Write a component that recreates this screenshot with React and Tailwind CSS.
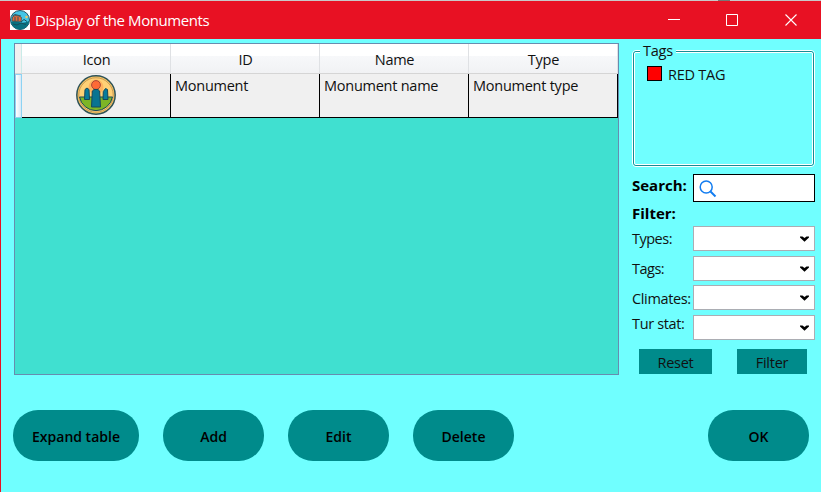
const columns = ["Icon", "ID", "Name", "Type"];

function MonumentIcon() {
  return (
    <svg viewBox="0 0 40 40" className="h-10 w-10" stroke="#17485a">
      <circle cx="20" cy="20" r="19.2" fill="#f8c765" stroke="#2f5358" strokeWidth="1.5" />
      <circle cx="20" cy="20" r="17.2" fill="#ffd176" stroke="#a77b45" strokeWidth=".6" />
      <circle cx="20" cy="12" r="7.5" fill="#ffb25d" stroke="none" />
      <path d="M3.5 22H36.5A16.8 16.8 0 0 1 3.5 22Z" fill="#7db526" strokeWidth="1" />
      <circle cx="20" cy="10" r="4.4" fill="#ff6a36" stroke="#a94837" strokeWidth="1" />
      <path d="M8.5 24.5 9 14.5 11 13 13 14.5 13.5 24.5ZM27 24.5 27.3 16.5 29.5 13.5 31.5 14.5 32 24.5Z" fill="#087c9c" strokeWidth="1" />
      <path d="M15.5 32 16.3 16 18 14.5H22L23.6 16 24.5 32Z" fill="#087491" strokeWidth="1" />
    </svg>
  );
}

function AppIcon() {
  return (
    <svg viewBox="0 0 20 20" className="h-5 w-5 bg-white">
      <circle cx="10" cy="10" r="9.5" fill="#43c5e5" stroke="#285060" />
      <path d="M.8 12Q5 10 9 12T19.2 11A9.3 9.3 0 0 1 .8 12Z" fill="#087080" />
      <path d="M2 11 2.5 7 5 5.5 9 6 11.5 7.5 11 11.5Z" fill="#e46b3b" stroke="#444c4c" strokeWidth=".8" />
      <path d="M5 7V11M8 7V11M2.5 6 5 4.5 11 6" stroke="#38535a" fill="none" />
      <path d="M11 12 14 9.5 17 11.5M3 14 7 15 11 13 16 14.5" stroke="#164d5c" fill="none" />
      <circle cx="16.5" cy="7" r="1.2" fill="#f5c65b" />
    </svg>
  );
}

function Combo({ label, labelClass, className }) {
  return (
    <div className={"flex h-[25px] " + className}>
      <span className={"w-[61px] shrink-0 whitespace-nowrap " + labelClass}>{label}</span>
      <div className="flex h-[25px] w-[122px] items-center justify-end border border-[#abadb3] bg-white pr-[5px]">
        <svg viewBox="0 0 9 6" className="h-[6px] w-[9px]">
          <path d="M0 .5H2.5L4.5 2 6.5.5H9V1.5L4.5 5.8 0 1.5Z" fill="#000" />
        </svg>
      </div>
    </div>
  );
}

function Pill({ children, className }) {
  return (
    <button className={"flex h-[51px] items-center justify-center rounded-[25px] bg-[#008b8b] pt-[3px] text-[14px] font-semibold " + className}>
      {children}
    </button>
  );
}

export default function App() {
  return (
    <div className="flex h-[492px] w-[821px] flex-col overflow-hidden bg-[#70ffff] font-['Open_Sans','Noto_Sans',sans-serif] text-[14.5px] leading-5 tracking-[-0.25px] text-[#111]">
      <div className="flex h-px shrink-0 bg-[#c8c8c8]">
        <div className="ml-[718px] w-3 bg-[#777]" />
      </div>
      <header className="flex h-[38px] shrink-0 items-center bg-[#e81123] pl-[10px] text-white">
        <AppIcon />
        <h1 className="-mt-px ml-[5px] text-[15px] tracking-[-0.42px]">Display of the Monuments</h1>
        <div className="ml-auto flex items-center pr-6">
          <svg className="h-3 w-3" viewBox="0 0 12 12"><path d="M0 5.5H12" stroke="white" /></svg>
          <svg className="ml-[46px] h-3 w-3" viewBox="0 0 12 12"><path d="M.5.5H11.5V11.5H.5Z" stroke="white" fill="none" /></svg>
          <svg className="ml-[47px] h-3 w-3" viewBox="0 0 12 12"><path d="M.5.5 11.5 11.5M11.5.5.5 11.5" stroke="white" strokeWidth="1.1" /></svg>
        </div>
      </header>

      <main className="flex h-[453px] flex-col border-l border-[#e81123]">
        <div className="flex h-[337px] pl-[13px] pt-1">
          <section className="h-[332px] w-[605px] shrink-0 border border-[#688caf] bg-[#40e0d0]">
            <div className="flex h-[30px] border-b border-[#d5d5d5] bg-linear-to-b from-white from-40% via-[#f7f8fa] via-42% to-[#f1f2f4]">
              <div className="w-[7px] border-r border-[#c9ebe8] bg-[#f0f0f0]" />
              {columns.map((c) => (
                <div key={c} className="w-[149px] border-r border-[#dfe1e4] pl-px pt-[6px] text-center">{c}</div>
              ))}
            </div>
            <div className="flex h-11">
              <div className="w-[7px] border border-[#8dd3f3] bg-linear-to-r from-white to-[#d9e8f5]" />
              <div className="flex w-[596px] border-b border-black bg-[#f0f0f0]">
                <div className="flex w-[149px] justify-center border-r border-black pt-px"><MonumentIcon /></div>
                <div className="w-[149px] border-r border-black pl-1 pt-[2px]">Monument</div>
                <div className="w-[149px] border-r border-black pl-1 pt-[2px]">Monument name</div>
                <div className="w-[149px] border-r border-black pl-1 pt-[2px]">Monument type</div>
              </div>
            </div>
          </section>

          <aside className="ml-[13px] w-[183px] shrink-0">
            <div className="relative mt-[7px] h-[117px] w-[183px] rounded-[4px] border border-white">
              <div className="h-full rounded-[3px] border border-[#168e96]">
                <div className="flex h-full items-start rounded-[2px] border border-white pl-3 pt-[11px]">
                  <div className="mt-[2px] h-[15px] w-[15px] border border-black bg-[#f00]" />
                  <span className="ml-[6px] pt-px tracking-[-0.25px]">RED TAG</span>
                </div>
              </div>
              <div className="absolute -top-[10px] left-[7px] w-9 bg-[#70ffff] pl-[3px]">Tags</div>
            </div>
            <div className="mt-[7px] flex h-7">
              <span className="w-[61px] pt-px text-[15px] font-bold tracking-[0px] text-black">Search:</span>
              <div className="h-7 w-[122px] border border-black bg-white pl-[5px] pt-[5px]">
                <svg viewBox="0 0 18 18" className="h-[18px] w-[18px]" fill="none" stroke="#127cf0">
                  <circle cx="7.2" cy="7" r="6" strokeWidth="1.5" />
                  <path d="m11.5 11.5 5 5" strokeWidth="2" />
                </svg>
              </div>
            </div>
            <div className="mt-px h-5 text-[15px] font-bold tracking-[0px] text-black">Filter:</div>
            <Combo label="Types:" labelClass="pt-[3px] tracking-[-0.5px]" className="mt-[3px]" />
            <Combo label="Tags:" labelClass="pt-[3px] tracking-[-0.5px]" className="mt-[5px]" />
            <Combo label="Climates:" labelClass="pt-[4px] tracking-[-0.35px]" className="mt-[4px]" />
            <Combo label="Tur stat:" labelClass="-mt-px tracking-[-0.35px]" className="mt-[5px]" />
            <div className="ml-[7px] mt-[9px] flex gap-[25px]">
              <button className="h-[25px] w-[73px] bg-[#008b8b] pt-[3px]">Reset</button>
              <button className="h-[25px] w-[70px] bg-[#008b8b] pt-[3px]">Filter</button>
            </div>
          </aside>
        </div>
        <footer className="flex pl-3 pr-3 pt-[34px] tracking-[0px] text-black">
          <Pill className="w-[126px]">Expand table</Pill>
          <Pill className="ml-6 w-[101px]">Add</Pill>
          <Pill className="ml-6 w-[101px]">Edit</Pill>
          <Pill className="ml-6 w-[101px]">Delete</Pill>
          <Pill className="ml-auto w-[101px]">OK</Pill>
        </footer>
      </main>
    </div>
  );
}
